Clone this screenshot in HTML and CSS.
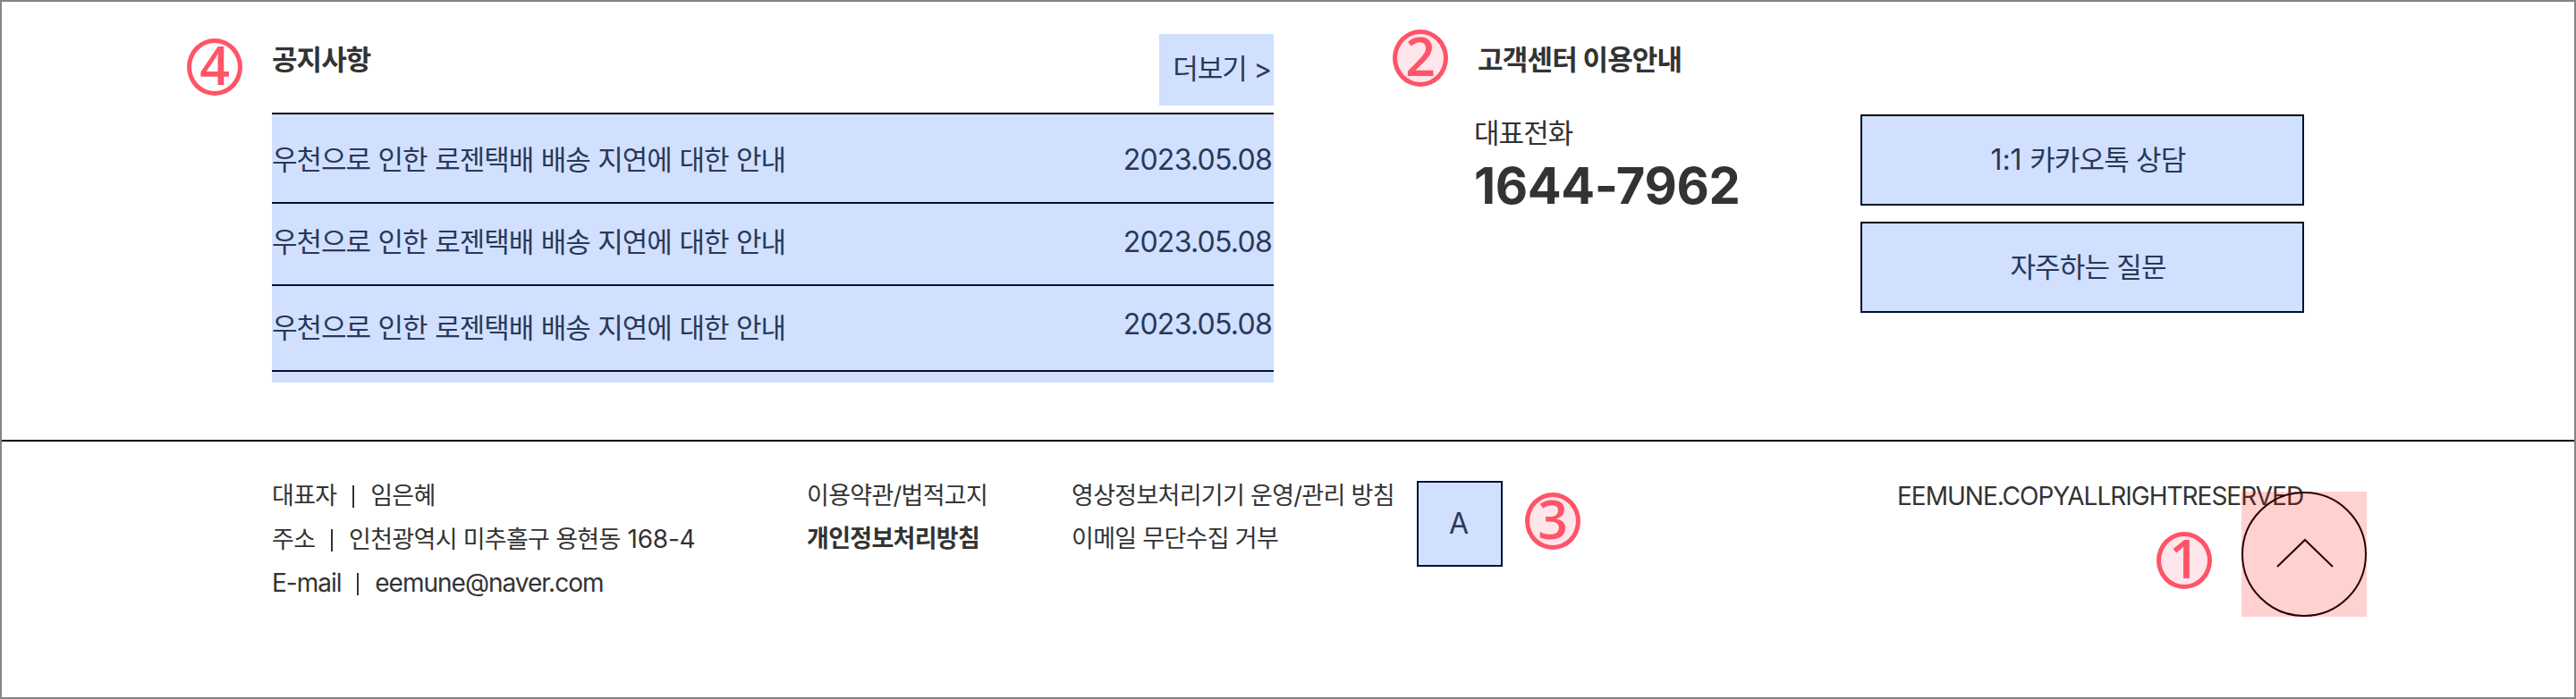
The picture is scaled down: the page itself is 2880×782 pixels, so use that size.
FILE: index.html
```html
<!DOCTYPE html>
<html lang="ko">
<head>
<meta charset="utf-8">
<title>EEMUNE</title>
<link rel="stylesheet" href="styles.css">
</head>
<body>
<div class="page">
  <section class="support">
    <div class="notice">
      <div class="notice-head">
        <h2 class="title">공지사항</h2>
        <a class="more">더보기 &gt;</a>
      </div>
      <ul class="notice-list">
        <li class="row row-first"><span class="subject">우천으로 인한 로젠택배 배송 지연에 대한 안내</span><span class="date">2023.05.08</span></li>
        <li class="row row-second"><span class="subject">우천으로 인한 로젠택배 배송 지연에 대한 안내</span><span class="date">2023.05.08</span></li>
        <li class="row row-third"><span class="subject">우천으로 인한 로젠택배 배송 지연에 대한 안내</span><span class="date">2023.05.08</span></li>
      </ul>
    </div>
    <div class="center">
      <h2 class="title title-center">고객센터 이용안내</h2>
      <div class="center-body">
        <div class="phone">
          <p class="phone-label">대표전화</p>
          <p class="phone-number">1644-7962</p>
        </div>
        <div class="buttons">
          <a class="button"><span class="ratio">1:1</span> 카카오톡 상담</a>
          <a class="button">자주하는 질문</a>
        </div>
      </div>
    </div>
  </section>
  <footer class="footer">
    <div class="company">
      <p class="line">대표자 <i class="bar"></i> 임은혜</p>
      <p class="line">주소 <i class="bar"></i> 인천광역시 미추홀구 용현동 <span class="lot">168-4</span></p>
      <p class="line mail">E-mail <i class="bar"></i> eemune@naver.com</p>
    </div>
    <div class="terms">
      <p class="line">이용약관/법적고지</p>
      <p class="line strong">개인정보처리방침</p>
    </div>
    <div class="policy">
      <p class="line">영상정보처리기기 운영/관리 방침</p>
      <p class="line">이메일 무단수집 거부</p>
    </div>
    <div class="mark">A</div>
    <p class="line copyright">EEMUNE.COPYALLRIGHTRESERVED</p>
  </footer>
  <a class="to-top">
    <svg class="to-top-icon" viewBox="0 0 140 140"><circle cx="70" cy="70" r="69"/><path d="M40 84 71 54l31 30"/></svg>
  </a>
  <span class="badge badge-1">1</span>
  <span class="badge badge-2">2</span>
  <span class="badge badge-3">3</span>
  <span class="badge badge-4">4</span>
</div>
</body>
</html>
```
FILE: styles.css
```css
* { box-sizing: border-box; margin: 0; padding: 0; }
body {
  background: #fff;
  color: #333;
  font-family: Inter, "Noto Sans CJK KR", sans-serif;
}
.page { position: relative; width: 2880px; height: 782px; border: 2px solid #858585; overflow: hidden; white-space: nowrap; }
.support { display: flex; height: 492px; border-bottom: 2px solid #000; padding: 36px 0 0 302px; }
.notice { width: 1120px; margin-right: 224px; }
.notice-head { display: flex; justify-content: space-between; height: 88px; }
.title { font-size: 31px; font-weight: 700; line-height: 40px; margin-top: 9px; letter-spacing: -0.9px; }
.more { width: 128px; height: 80px; padding-right: 3px; background: #d1e0ff; color: #293859; font-size: 31px; line-height: 78px; text-align: right; letter-spacing: -1px; }
.notice-list { list-style: none; height: 302px; border-top: 2px solid #000; background: #d1e0ff; color: #293859; }
.row { display: flex; justify-content: space-between; border-bottom: 2px solid #001033; padding-right: 2px; }
.row-first { height: 100px; padding-top: 31px; }
.row-second { height: 92px; padding-top: 23px; }
.row-third { height: 96px; padding-top: 23px; }
.subject { font-size: 31px; line-height: 40px; letter-spacing: -1px; word-spacing: 0.8px; }
.row-third .subject { padding-top: 4px; }
.date { font-size: 32px; line-height: 40px; letter-spacing: -0.75px; }
.center { width: 928px; }
.title-center { margin-left: 4px; letter-spacing: -0.8px; }
.center-body { display: flex; justify-content: space-between; margin-top: 41px; }
.phone { padding-top: 1px; }
.phone-label { font-size: 31px; line-height: 40px; letter-spacing: -0.9px; }
.phone-number { font-size: 56px; line-height: 79px; font-weight: 700; letter-spacing: -0.4px; }
.buttons { display: grid; gap: 18px; }
.button { width: 496px; height: 102px; border: 2px solid #001033; border-top-color: #000; background: #d1e0ff; color: #293859; font-size: 31px; line-height: 98px; text-align: center; letter-spacing: -0.8px; padding-left: 13px; }
.ratio { font-size: 32px; letter-spacing: -0.2px; margin-right: 1px; }
.footer { display: flex; padding: 44px 0 0 302px; }
.line { font-size: 27px; line-height: 48px; letter-spacing: -0.7px; margin-top: -7px; margin-bottom: 7px; }
.company { width: 598px; }
.bar { display: inline-block; width: 2px; height: 25px; background: #333; margin: 0 11px; vertical-align: -4px; }
.lot { font-size: 28px; letter-spacing: -0.2px; margin-left: 1px; }
.company .line { letter-spacing: -0.7px; }
.company .mail { font-size: 28px; letter-spacing: -1px; }
.terms { width: 296px; }
.strong { font-weight: 700; }
.policy { width: 386px; }
.mark { width: 96px; height: 96px; border: 2px solid #001033; background: #d1e0ff; color: #293859; font-size: 32px; line-height: 92px; text-align: center; padding-right: 2px; }
.copyright { font-size: 28px; letter-spacing: -1px; margin-left: 441px; }
.to-top { position: absolute; left: 2504px; top: 548px; width: 140px; height: 140px; background: rgba(255, 0, 0, 0.18); }
.to-top-icon { display: block; width: 140px; height: 140px; fill: none; stroke: #2c0000; stroke-width: 2; }
.badge { position: absolute; width: 62px; height: 64px; border: 5px solid #ff5468; border-radius: 50%; background: #ffe6ea; color: #ff5468; font: 600 59px/48px "Open Sans", sans-serif; text-align: center; }
.badge-1 { left: 2409px; top: 593px; }
.badge-2 { left: 1555px; top: 31px; }
.badge-3 { left: 1703px; top: 549px; }
.badge-4 { left: 207px; top: 41px; background: #fff; }
```
